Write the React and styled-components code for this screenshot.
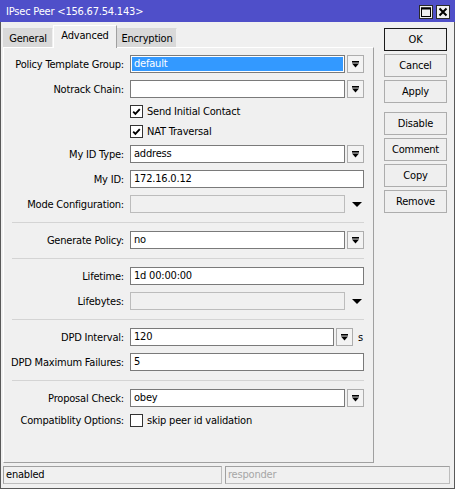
import React from 'react';
import styled, { createGlobalStyle } from 'styled-components';

const GlobalStyle = createGlobalStyle`
    html, body {
        margin: 0;
        padding: 0;
        background: #f0f0f0;
    }
    body {
        font-family: "DejaVu Sans Condensed", "Liberation Sans", Arial, sans-serif;
        font-size: 11px;
        letter-spacing: -0.2px;
        color: #000;
    }
    * {
        box-sizing: border-box;
    }
`;

const Window = styled.div`
    width: 455px;
    height: 489px;
    border: 1px solid #595959;
    border-top: 0;
    background: #f0f0f0;
    display: flex;
    flex-direction: column;
`;

const TitleBar = styled.div`
    height: 22px;
    margin: 0 -1px;
    background: #4f4fc9;
    color: #fff;
    display: flex;
    align-items: center;
    padding: 1px 5px 0 6px;
    flex-shrink: 0;
`;

const Title = styled.div`
    flex: 1;
    white-space: nowrap;
`;

const TitleButtons = styled.div`
    display: flex;
    gap: 3px;
`;

const TitleButton = styled.div`
    width: 14px;
    height: 14px;
    background: #f0f0f0;
    border: 1px solid #2a2a2a;
    display: flex;
    align-items: center;
    justify-content: center;
`;

const Main = styled.div`
    flex: 1;
    display: flex;
    gap: 10px;
    padding: 3px 6px 2px 2px;
    min-height: 0;
`;

const LeftColumn = styled.div`
    width: 371px;
    display: flex;
    flex-direction: column;
`;

const TabBar = styled.div`
    display: flex;
    height: 22px;
    align-items: flex-end;
    position: relative;
    z-index: 1;
`;

const Tab = styled.div`
    width: ${p => p.$w}px;
    height: ${p => (p.$active ? 23 : 19)}px;
    margin-bottom: ${p => (p.$active ? -1 : 0)}px;
    background: ${p => (p.$active ? '#f0f0f0' : '#d9d9d9')};
    border-top: 1px solid ${p => (p.$active ? '#ffffff' : '#d9d9d9')};
    border-left: 1px solid ${p => (p.$active ? '#ffffff' : '#d9d9d9')};
    border-right: 1px solid ${p => (p.$active ? '#a0a0a0' : '#f0f0f0')};
    display: flex;
    justify-content: center;
    padding-top: 3px;
    white-space: nowrap;
`;

const Panel = styled.div`
    flex: 1;
    border-top: 1px solid #ffffff;
    border-left: 1px solid #ffffff;
    border-right: 1px solid #a0a0a0;
    border-bottom: 1px solid #a0a0a0;
    padding-top: 6px;
    display: flex;
    flex-direction: column;
    gap: 5px;
`;

const Row = styled.div`
    display: grid;
    grid-template-columns: 120px 1fr;
    column-gap: 6px;
    align-items: center;
    height: ${p => (p.$check ? 15 : 20)}px;
    padding-right: 9px;
`;

const Label = styled.div`
    text-align: right;
    white-space: nowrap;
`;

const Field = styled.div`
    display: flex;
    align-items: center;
    gap: 2px;
`;

const Input = styled.div`
    flex: ${p => (p.$w ? 'none' : 1)};
    width: ${p => (p.$w ? `${p.$w}px` : 'auto')};
    height: 18px;
    line-height: 16px;
    padding: 0 3px;
    border: 1px solid ${p => (p.$disabled ? '#bcbcbc' : '#7a7a7a')};
    background: ${p => (p.$disabled ? '#f0f0f0' : p.$selected ? '#3399ff' : '#ffffff')};
    box-shadow: ${p => (p.$selected ? 'inset 0 0 0 1px #ffffff' : 'none')};
    color: ${p => (p.$selected ? '#ffffff' : '#000')};
    white-space: nowrap;
    overflow: hidden;
`;

const DropButton = styled.div`
    width: 17px;
    height: 18px;
    flex: none;
    border: 1px solid #adadad;
    background: #f3f3f3;
    display: flex;
    align-items: center;
    justify-content: center;
`;

const ArrowSlot = styled.div`
    width: 17px;
    height: 18px;
    flex: none;
    display: flex;
    align-items: center;
    justify-content: center;
    padding-left: 2px;
`;

const Unit = styled.span`
    margin-left: 3px;
`;

const CheckLabel = styled.label`
    display: flex;
    align-items: center;
    gap: 4px;
    white-space: nowrap;
`;

const Box = styled.span`
    width: 13px;
    height: 13px;
    border: 1px solid #333;
    background: #fff;
    display: flex;
    align-items: center;
    justify-content: center;
`;

const Separator = styled.div`
    height: 1px;
    background: #d4d4d4;
    margin: 3px 9px 2px 8px;
`;

const RightColumn = styled.div`
    width: 63px;
    padding-top: 3px;
    display: flex;
    flex-direction: column;
    gap: 3px;
`;

const Button = styled.div`
    height: 23px;
    border: 1px solid ${p => (p.$primary ? '#1a1a1a' : '#adadad')};
    background: #efefef;
    display: flex;
    align-items: center;
    justify-content: center;
    margin-top: ${p => (p.$spaced ? 6 : 0)}px;
`;

const StatusBar = styled.div`
    display: grid;
    grid-template-columns: 219px 1fr;
    gap: 3px;
    height: 18px;
    margin: 1px 4px 4px 2px;
    flex-shrink: 0;
`;

const StatusCell = styled.div`
    border: 1px solid #bdbdbd;
    border-top-color: #a0a0a0;
    border-left-color: #a0a0a0;
    line-height: 16px;
    padding-left: 2px;
    color: ${p => (p.$muted ? '#a6a6a6' : '#000')};
`;

const DropIcon = () => (
    <svg width="9" height="9" viewBox="0 0 9 9">
        <rect x="1" y="1" width="7" height="1.6" fill="#000" />
        <path d="M1 3.6h7L4.5 7.6z" fill="#000" />
    </svg>
);

const DownArrow = () => (
    <svg width="10" height="5" viewBox="0 0 10 5">
        <path d="M0 0h10L5 5z" fill="#000" />
    </svg>
);

const Checkbox = ({ checked, children }) => (
    <CheckLabel>
        <Box>
            {checked && (
                <svg width="9" height="9" viewBox="0 0 9 9">
                    <path d="M1.2 4.6L3.4 6.8L7.8 2.2" stroke="#000" strokeWidth="1.9" fill="none" />
                </svg>
            )}
        </Box>
        {children}
    </CheckLabel>
);

const SelectRow = ({ label, value, selected }) => (
    <Row>
        <Label>{label}</Label>
        <Field>
            <Input $selected={selected}>{value}</Input>
            <DropButton><DropIcon /></DropButton>
        </Field>
    </Row>
);

const TextRow = ({ label, value }) => (
    <Row>
        <Label>{label}</Label>
        <Field>
            <Input>{value}</Input>
        </Field>
    </Row>
);

const DisabledRow = ({ label }) => (
    <Row>
        <Label>{label}</Label>
        <Field>
            <Input $disabled />
            <ArrowSlot><DownArrow /></ArrowSlot>
        </Field>
    </Row>
);

const CheckRow = ({ label, checked, children }) => (
    <Row $check>
        <Label>{label}</Label>
        <Checkbox checked={checked}>{children}</Checkbox>
    </Row>
);

const App = () => (
    <>
        <GlobalStyle />
        <Window>
            <TitleBar>
                <Title>IPsec Peer &lt;156.67.54.143&gt;</Title>
                <TitleButtons>
                    <TitleButton>
                        <svg width="10" height="10" viewBox="0 0 10 10">
                            <rect x="0.5" y="1" width="9" height="8.5" fill="none" stroke="#000" strokeWidth="1" />
                            <rect x="0" y="0.5" width="10" height="2" fill="#000" />
                        </svg>
                    </TitleButton>
                    <TitleButton>
                        <svg width="10" height="10" viewBox="0 0 10 10">
                            <path d="M1.5 1.5L8.5 8.5M8.5 1.5L1.5 8.5" stroke="#000" strokeWidth="2" />
                        </svg>
                    </TitleButton>
                </TitleButtons>
            </TitleBar>
            <Main>
                <LeftColumn>
                    <TabBar>
                        <Tab $w={50}>General</Tab>
                        <Tab $w={64} $active>Advanced</Tab>
                        <Tab $w={60}>Encryption</Tab>
                    </TabBar>
                    <Panel>
                        <SelectRow label="Policy Template Group:" value="default" selected />
                        <SelectRow label="Notrack Chain:" value="" />
                        <CheckRow checked>Send Initial Contact</CheckRow>
                        <CheckRow checked>NAT Traversal</CheckRow>
                        <SelectRow label="My ID Type:" value="address" />
                        <TextRow label="My ID:" value="172.16.0.12" />
                        <DisabledRow label="Mode Configuration:" />
                        <Separator />
                        <SelectRow label="Generate Policy:" value="no" />
                        <Separator />
                        <TextRow label="Lifetime:" value="1d 00:00:00" />
                        <DisabledRow label="Lifebytes:" />
                        <Separator />
                        <Row>
                            <Label>DPD Interval:</Label>
                            <Field>
                                <Input $w={204}>120</Input>
                                <DropButton><DropIcon /></DropButton>
                                <Unit>s</Unit>
                            </Field>
                        </Row>
                        <TextRow label="DPD Maximum Failures:" value="5" />
                        <Separator />
                        <SelectRow label="Proposal Check:" value="obey" />
                        <CheckRow label="Compatiblity Options:">skip peer id validation</CheckRow>
                    </Panel>
                </LeftColumn>
                <RightColumn>
                    <Button $primary>OK</Button>
                    <Button>Cancel</Button>
                    <Button>Apply</Button>
                    <Button $spaced>Disable</Button>
                    <Button>Comment</Button>
                    <Button>Copy</Button>
                    <Button>Remove</Button>
                </RightColumn>
            </Main>
            <StatusBar>
                <StatusCell>enabled</StatusCell>
                <StatusCell $muted>responder</StatusCell>
            </StatusBar>
        </Window>
    </>
);

export default App;
